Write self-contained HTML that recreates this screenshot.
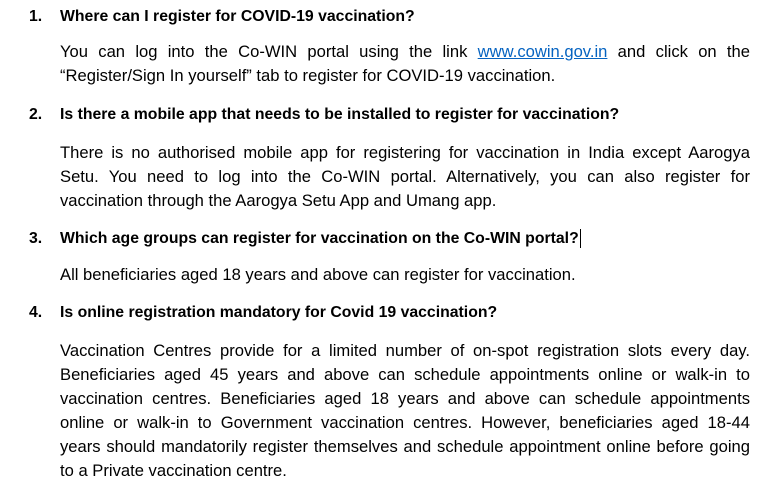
<!DOCTYPE html>
<html><head><meta charset="utf-8"><style>
html,body{margin:0;padding:0;background:#fff;width:781px;height:482px;overflow:hidden}
body{font-family:"Liberation Sans",sans-serif;color:#000;position:relative}
.l{position:absolute;left:60px;width:690px;height:18px;line-height:18px;font-size:16.6px;white-space:nowrap}
.j{text-align:justify;text-align-last:justify;white-space:normal}
.q{font-weight:bold;font-size:15.8px}
.n{position:absolute;left:29px;font-weight:bold;font-size:15.8px;line-height:18px}
a{color:#0563c1;text-decoration:underline}
.cur{position:absolute;left:580px;top:229px;width:1px;height:19px;background:#000}
</style></head><body>
<div class="n" style="top:8px">1.</div>
<div class="l q" style="top:8px">Where can I register for COVID-19 vaccination?</div>
<div class="l j" style="top:43px">You can log into the Co-WIN portal using the link <a>www.cowin.gov.in</a> and click on the</div>
<div class="l" style="top:67px">“Register/Sign In yourself” tab to register for COVID-19 vaccination.</div>

<div class="n" style="top:106px">2.</div>
<div class="l q" style="top:106px">Is there a mobile app that needs to be installed to register for vaccination?</div>
<div class="l j" style="top:144px">There is no authorised mobile app for registering for vaccination in India except Aarogya</div>
<div class="l j" style="top:168px">Setu. You need to log into the Co-WIN portal. Alternatively, you can also register for</div>
<div class="l" style="top:192px">vaccination through the Aarogya Setu App and Umang app.</div>

<div class="n" style="top:230px">3.</div>
<div class="l q" style="top:230px">Which age groups can register for vaccination on the Co-WIN portal?</div>
<div class="cur"></div>
<div class="l" style="top:266px">All beneficiaries aged 18 years and above can register for vaccination.</div>

<div class="n" style="top:304px">4.</div>
<div class="l q" style="top:304px">Is online registration mandatory for Covid 19 vaccination?</div>
<div class="l j" style="top:342px">Vaccination Centres provide for a limited number of on-spot registration slots every day.</div>
<div class="l j" style="top:366px">Beneficiaries aged 45 years and above can schedule appointments online or walk-in to</div>
<div class="l j" style="top:390px">vaccination centres. Beneficiaries aged 18 years and above can schedule appointments</div>
<div class="l j" style="top:414px">online or walk-in to Government vaccination centres. However, beneficiaries aged 18-44</div>
<div class="l j" style="top:438px">years should mandatorily register themselves and schedule appointment online before going</div>
<div class="l" style="top:462px">to a Private vaccination centre.</div>
</body></html>
